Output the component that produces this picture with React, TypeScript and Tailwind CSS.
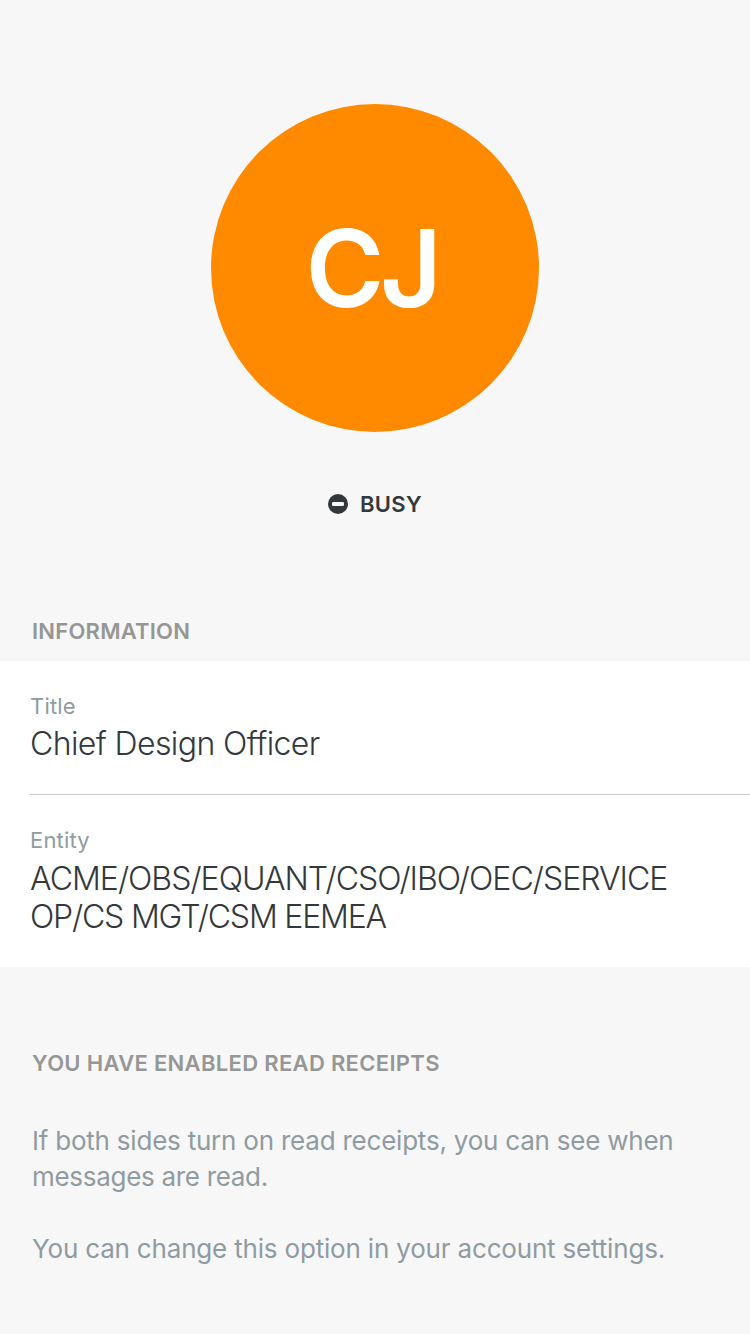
export default function App() {
  return (
    <main className="h-[1334px] w-[750px] overflow-hidden bg-[#f7f7f7] font-['Inter',sans-serif] text-[#32383b]">
      <section className="flex h-[661px] flex-col items-center pt-[104px]">
        <div className="flex size-[328px] shrink-0 items-center justify-center rounded-full bg-[#ff8a00] pt-px pr-[7px]">
          <span className="text-[107px] leading-none font-semibold tracking-[-4.5px] text-white">CJ</span>
        </div>
        <div className="mt-[58px] flex h-7 items-center gap-3">
          <svg className="size-5" viewBox="0 0 20 20" aria-hidden="true">
            <circle cx="10" cy="10" r="10" fill="#32383b" />
            <rect x="4" y="8" width="12" height="4" rx="1.3" fill="#f7f7f7" />
          </svg>
          <span className="text-[22px] leading-7 font-[560] tracking-[0.3px]">BUSY</span>
        </div>
        <h2 className="mt-[99px] w-full pl-8 text-[22px] leading-7 font-[560] tracking-[0.23px] text-[#969696]">INFORMATION</h2>
      </section>
      <section className="h-[306px] bg-white pl-[30px]">
        <div className="h-[134px] border-b border-[#c5cbcd] pt-[31px]">
          <p className="text-[22px] leading-7 tracking-[0.2px] text-[#8f9ba1]">Title</p>
          <p className="mt-[5px] text-[32px] leading-[38px] font-[270] tracking-[-0.6px]">Chief Design Officer</p>
        </div>
        <div className="pt-[31px]">
          <p className="text-[22px] leading-7 tracking-[0.2px] text-[#8f9ba1]">Entity</p>
          <p className="mt-1.5 text-[32px] leading-[38px] font-[270] tracking-[-0.97px]">ACME/OBS/EQUANT/CSO/IBO/OEC/SERVICE<br /><span className="tracking-[-1.18px]">OP/CS MGT/CSM EEMEA</span></p>
        </div>
      </section>
      <section className="px-8 pt-[82px]">
        <h2 className="text-[22px] leading-7 font-[560] tracking-[0.32px] text-[#969696]">YOU HAVE ENABLED READ RECEIPTS</h2>
        <div className="mt-[46px] text-[26px] leading-9 tracking-[-0.22px] text-[#8f9ba1]">
          <p>If both sides turn on read receipts, you can see when<br /><span className="tracking-[-0.3px]">messages are read.</span></p>
          <p className="mt-9 tracking-[-0.18px]">You can change this option in your account settings.</p>
        </div>
      </section>
    </main>
  );
}
